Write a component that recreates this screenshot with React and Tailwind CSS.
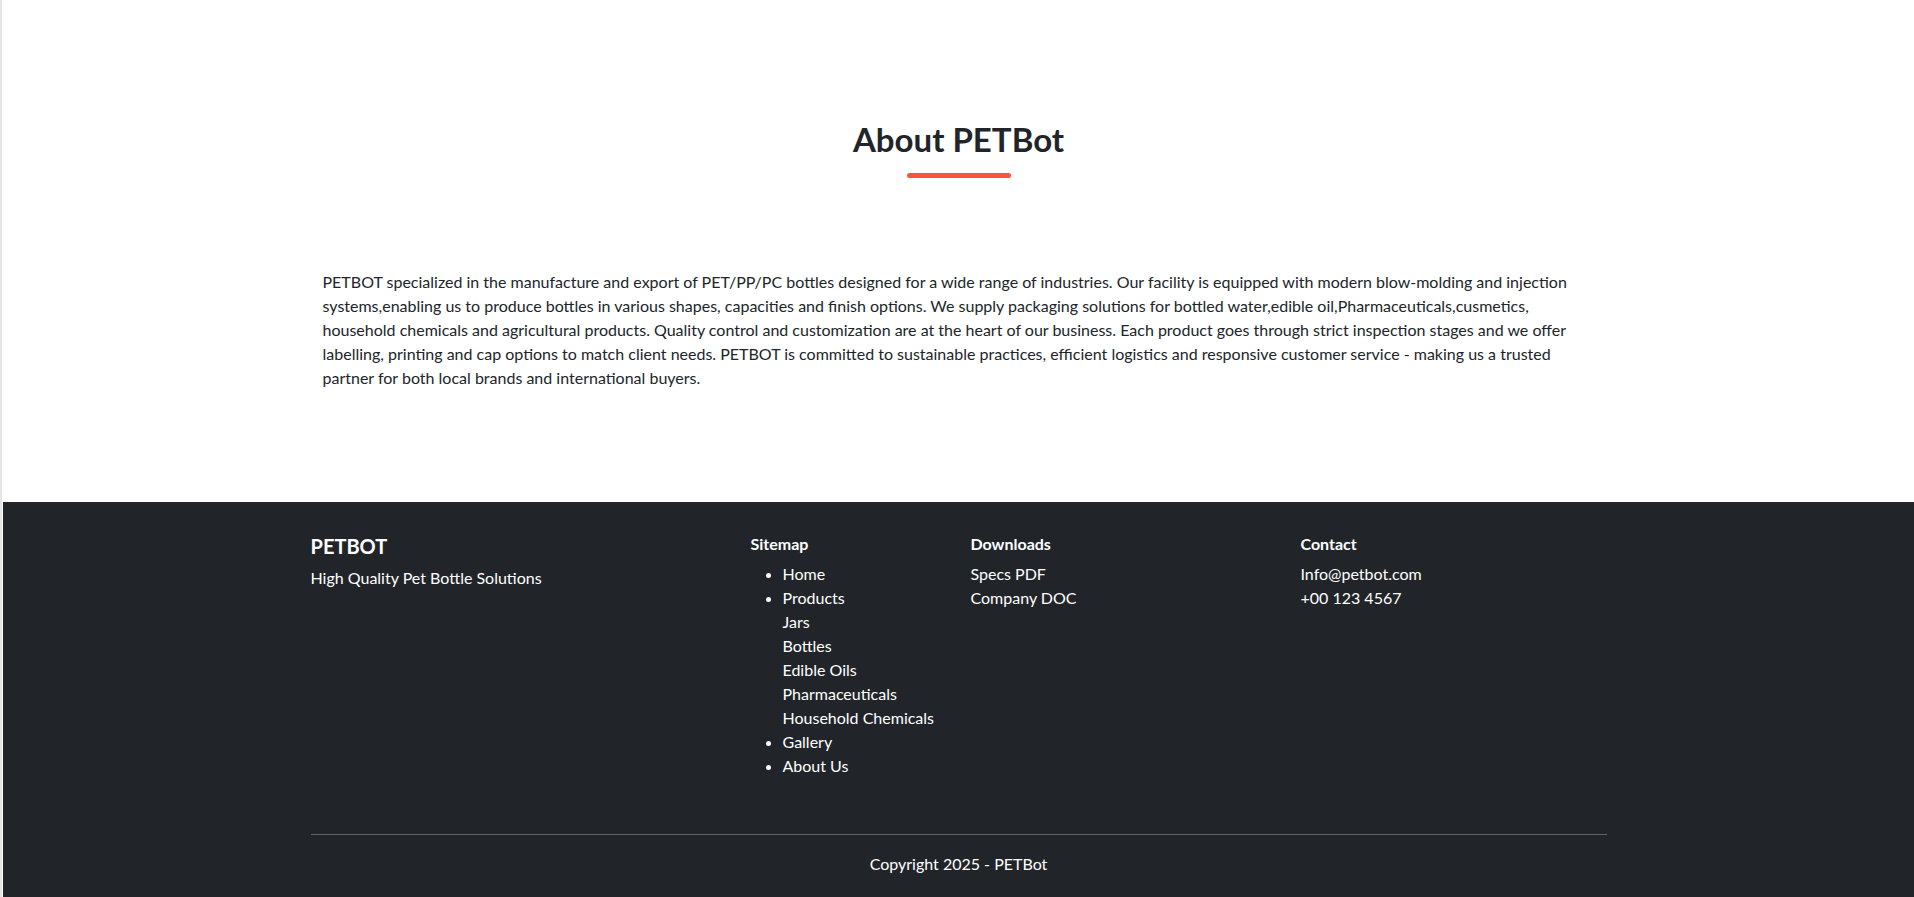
import React from "react";

const sitemap = [
  { label: "Home", bullet: true },
  { label: "Products", bullet: true },
  { label: "Jars" },
  { label: "Bottles" },
  { label: "Edible Oils" },
  { label: "Pharmaceuticals" },
  { label: "Household Chemicals" },
  { label: "Gallery", bullet: true },
  { label: "About Us", bullet: true },
];

const App = () => {
  return (
    <div className="min-h-screen bg-white border-l-2 border-[#e6e6e6] pl-px font-['Lato',sans-serif] text-[#212529]">
      {/* about section */}
      <section className="pt-[120px] pb-[112px]">
        <div className="mx-auto w-[1296px]">
          <h2 className="text-center text-[33px] leading-[1.2] font-bold">About PETBot</h2>
          <div className="mx-auto mt-[13px] h-[5px] w-[104px] rounded-full bg-[#ff533a]" />
          <p className="mt-[92px] px-3 text-base leading-6">
            PETBOT specialized in the manufacture and export of PET/PP/PC bottles designed for a wide range of
            industries. Our facility is equipped with modern blow-molding and injection systems,enabling us to
            produce bottles in various shapes, capacities and finish options. We supply packaging solutions for
            bottled water,edible oil,Pharmaceuticals,cusmetics, household chemicals and agricultural products.
            Quality control and customization are at the heart of our business. Each product goes through strict
            inspection stages and we offer labelling, printing and cap options to match client needs. PETBOT is
            committed to sustainable practices, efficient logistics and responsive customer service - making us a
            trusted partner for both local brands and international buyers.
          </p>
        </div>
      </section>

      {/* footer */}
      <footer className="bg-[#212529] text-white pt-8 pb-[21px]">
        <div className="mx-auto w-[1296px]">
          <div className="grid grid-cols-12 gap-x-6">
            <div className="col-span-4">
              <h5 className="text-[20px] leading-[1.2] font-bold mb-2">PETBOT</h5>
              <p className="text-base leading-6">High Quality Pet Bottle Solutions</p>
            </div>
            <div className="col-span-2">
              <h6 className="text-base leading-[1.2] font-bold mb-[9px]">Sitemap</h6>
              <ul className="pl-8 text-base leading-6">
                {sitemap.map((item) => (
                  <li key={item.label} className={item.bullet ? "list-disc" : "list-none"}>
                    {item.label}
                  </li>
                ))}
              </ul>
            </div>
            <div className="col-span-3">
              <h6 className="text-base leading-[1.2] font-bold mb-[9px]">Downloads</h6>
              <ul className="text-base leading-6">
                <li>Specs PDF</li>
                <li>Company DOC</li>
              </ul>
            </div>
            <div className="col-span-3">
              <h6 className="text-base leading-[1.2] font-bold mb-[9px]">Contact</h6>
              <ul className="text-base leading-6">
                <li>Info@petbot.com</li>
                <li>+00 123 4567</li>
              </ul>
            </div>
          </div>
          <hr className="mt-[56px] border-t border-[#5f6266]" />
          <p className="mt-[17px] text-center text-base leading-6">Copyright 2025 - PETBot</p>
        </div>
      </footer>
    </div>
  );
};

export default App;
